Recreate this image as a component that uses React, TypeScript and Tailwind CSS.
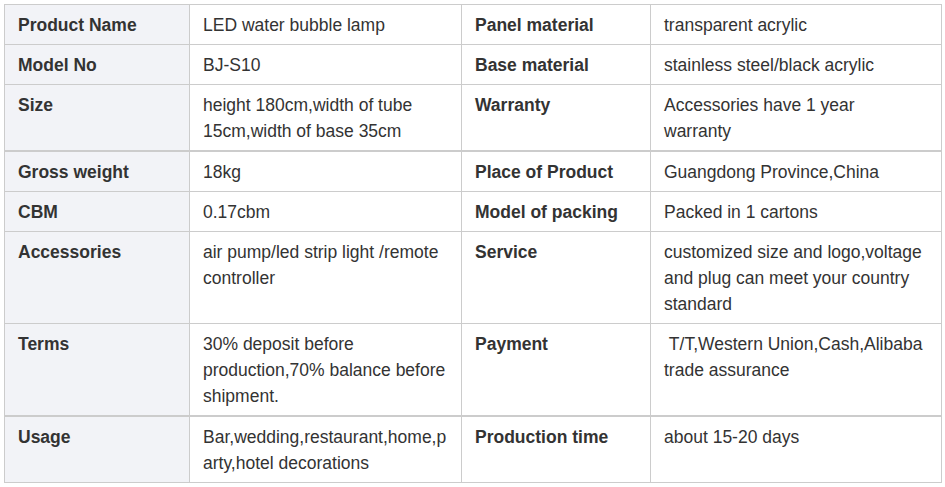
import type { ReactNode } from "react";

const rows: { a: string; b: string; c: string; d: ReactNode; thick?: boolean }[] = [
  { a: "Product Name", b: "LED water bubble lamp", c: "Panel material", d: "transparent acrylic" },
  { a: "Model No", b: "BJ-S10", c: "Base material", d: "stainless steel/black acrylic" },
  { a: "Size", b: "height 180cm,width of tube 15cm,width of base 35cm", c: "Warranty", d: <>Accessories have 1 year<br />warranty</>, thick: true },
  { a: "Gross weight", b: "18kg", c: "Place of Product", d: "Guangdong Province,China" },
  { a: "CBM", b: "0.17cbm", c: "Model of packing", d: "Packed in 1 cartons" },
  { a: "Accessories", b: "air pump/led strip light /remote controller", c: "Service", d: "customized size and logo,voltage and plug can meet your country standard" },
  { a: "Terms", b: "30% deposit before production,70% balance before shipment.", c: "Payment", d: "\u00a0T/T,Western Union,Cash,Alibaba trade assurance", thick: true },
  { a: "Usage", b: "Bar,wedding,restaurant,home,party,hotel decorations", c: "Production time", d: "about 15-20 days" },
];

export default function App() {
  const cell = "border border-[#cccccc] align-top px-[13px] pt-[7px] pb-[6px] break-words";
  return (
    <div className="bg-white min-h-screen p-1" style={{ fontFamily: '"Liberation Sans", Arial, sans-serif' }}>
      <table className="table-fixed border-collapse w-[937px] text-[17.5px] leading-[26px] text-[#333333]">
        <colgroup>
          <col className="w-[185px]" />
          <col className="w-[272px]" />
          <col className="w-[189px]" />
          <col className="w-[291px]" />
        </colgroup>
        <tbody>
          {rows.map((r) => (
            <tr key={r.a} className={r.thick ? "border-b-2 border-[#cccccc]" : ""}>
              <td className={`${cell} bg-[#f2f3f7] font-bold`}>{r.a}</td>
              <td className={cell}>{r.b}</td>
              <td className={`${cell} font-bold`}>{r.c}</td>
              <td className={cell}>{r.d}</td>
            </tr>
          ))}
        </tbody>
      </table>
    </div>
  );
}
